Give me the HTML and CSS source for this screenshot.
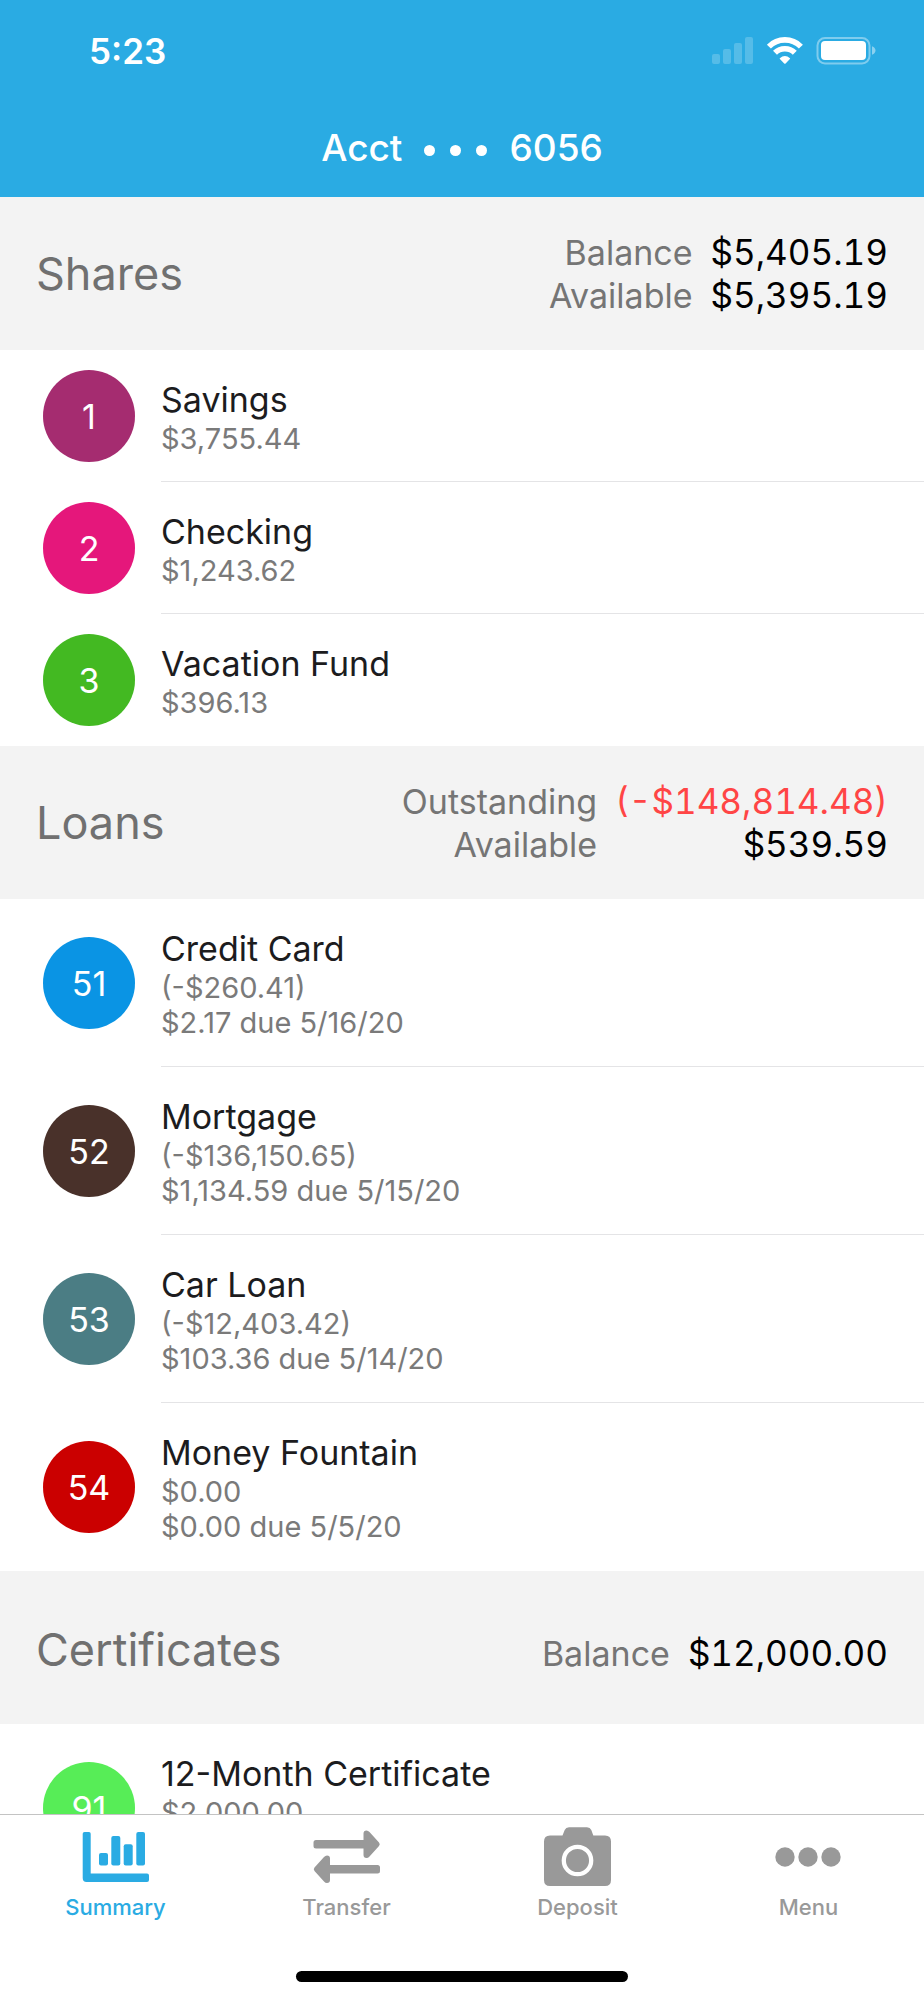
FILE: index.html
```html
<!DOCTYPE html>
<html lang="en">
<head>
<meta charset="utf-8">
<meta name="viewport" content="width=device-width, initial-scale=1">
<title>Account Summary</title>
<link rel="stylesheet" href="styles.css">
</head>
<body>
<div class="app">
  <header class="topbar">
    <div class="status">
      <span class="time">5:23</span>
      <svg class="status-icons" width="164" height="28" viewBox="0 0 164 28" fill="#fff" aria-hidden="true">
        <g opacity=".2">
          <rect x="0" y="17" width="8" height="10" rx="2"/>
          <rect x="11" y="12" width="8" height="15" rx="2"/>
          <rect x="22" y="6" width="8" height="21" rx="2"/>
          <rect x="33" y="0" width="8" height="27" rx="2"/>
        </g>
        <g fill="none" stroke="#fff" stroke-width="5.6">
          <path d="M56.900 9.600A22.400 22.400 0 0 1 88.900 9.600"/>
          <path d="M63 15.800A14 14 0 0 1 82.800 15.800"/>
        </g>
        <path d="M67.800 21.200Q72.900 16.800 78 21.200Q78.300 21.600 77.900 22L73.600 26.400Q72.900 27 72.200 26.400L67.900 22Q67.500 21.600 67.800 21.200Z"/>
        <rect x="105.500" y="1" width="52" height="25.500" rx="7.500" fill="none" stroke="#fff" stroke-width="2" opacity=".4"/>
        <rect x="109" y="4" width="45" height="19" rx="4"/>
        <path d="M160 9.200Q163.500 10.600 163.500 13.500T160 17.800Z" opacity=".45"/>
      </svg>
    </div>
    <h1 class="title"><span>Acct</span><span class="mask"><i></i><i></i><i></i></span><span>6056</span></h1>
  </header>

  <main class="accounts">
    <section>
      <div class="section-head">
        <h2>Shares</h2>
        <dl class="totals">
          <dt>Balance</dt><dd>$5,405.19</dd>
          <dt>Available</dt><dd>$5,395.19</dd>
        </dl>
      </div>
      <ul class="list">
        <li class="row"><span class="badge plum">1</span><div class="info"><h3>Savings</h3><p>$3,755.44</p></div></li>
        <li class="row"><span class="badge pink">2</span><div class="info"><h3>Checking</h3><p>$1,243.62</p></div></li>
        <li class="row"><span class="badge green">3</span><div class="info"><h3>Vacation Fund</h3><p>$396.13</p></div></li>
      </ul>
    </section>

    <section>
      <div class="section-head">
        <h2>Loans</h2>
        <dl class="totals">
          <dt>Outstanding</dt><dd class="negative">(-$148,814.48)</dd>
          <dt>Available</dt><dd>$539.59</dd>
        </dl>
      </div>
      <ul class="list tall">
        <li class="row"><span class="badge blue">51</span><div class="info"><h3>Credit Card</h3><p>(-$260.41)</p><p>$2.17 due 5/16/20</p></div></li>
        <li class="row"><span class="badge brown">52</span><div class="info"><h3>Mortgage</h3><p>(-$136,150.65)</p><p>$1,134.59 due 5/15/20</p></div></li>
        <li class="row"><span class="badge teal">53</span><div class="info"><h3>Car Loan</h3><p>(-$12,403.42)</p><p>$103.36 due 5/14/20</p></div></li>
        <li class="row"><span class="badge red">54</span><div class="info"><h3>Money Fountain</h3><p>$0.00</p><p>$0.00 due 5/5/20</p></div></li>
      </ul>
    </section>

    <section>
      <div class="section-head single">
        <h2>Certificates</h2>
        <dl class="totals">
          <dt>Balance</dt><dd>$12,000.00</dd>
        </dl>
      </div>
      <ul class="list tall">
        <li class="row"><span class="badge lime">91</span><div class="info"><h3>12-Month Certificate</h3><p>$2,000.00</p></div></li>
      </ul>
    </section>
  </main>

  <nav class="tabbar">
    <div class="tabs">
      <a class="tab active" href="#summary" aria-current="page">
        <svg width="68" height="60" viewBox="0 0 68 60" fill="currentColor" aria-hidden="true">
          <path d="M2.500 5H7Q8.700 5 8.700 6.700V46.600H65Q67 46.600 67 48.600V53Q67 55 65 55H4.500Q.700 55 .700 51V6.700Q.700 5 2.500 5Z"/>
          <rect x="17" y="26" width="9" height="12.500" rx="2"/>
          <rect x="29.300" y="9" width="9" height="29.500" rx="2"/>
          <rect x="41.700" y="17.300" width="9" height="21.200" rx="2"/>
          <rect x="54.300" y="5" width="8.700" height="33.500" rx="2"/>
        </svg>
        <span>Summary</span>
      </a>
      <a class="tab" href="#transfer">
        <svg width="68" height="60" viewBox="0 0 68 60" fill="currentColor" aria-hidden="true">
          <path d="M3 13H50.500V6.500Q50.500 3.500 53.500 3.500Q55.100 3.500 56.500 5L66 15.600Q67.500 17.300 66 19L56.500 29.500Q55.100 31 53.500 31Q50.500 31 50.500 28V21.500H3Q.500 21.500 .500 19V15.500Q.500 13 3 13Z"/>
          <path d="M64.500 38H17V31.500Q17 28.500 14 28.500Q12.400 28.500 11 30L1.500 40.600Q0 42.300 1.500 44L11 54.500Q12.400 56 14 56Q17 56 17 53V46.500H64.500Q67 46.500 67 44V40.500Q67 38 64.500 38Z"/>
        </svg>
        <span>Transfer</span>
      </a>
      <a class="tab" href="#deposit">
        <svg width="68" height="60" viewBox="0 0 68 60" fill="currentColor" aria-hidden="true">
          <path d="M6 8.500H18.500L20.700 3Q21.900 .300 25 .300H43Q46.100 .300 47.300 3L49.300 8.500H61Q67 8.500 67 14.500V53Q67 59 61 59H6Q0 59 0 53V14.500Q0 8.500 6 8.500Z"/>
          <circle cx="33.500" cy="33.500" r="13.700" fill="none" stroke="#fff" stroke-width="4.300"/>
        </svg>
        <span>Deposit</span>
      </a>
      <a class="tab" href="#menu">
        <svg width="68" height="60" viewBox="0 0 68 60" fill="currentColor" aria-hidden="true">
          <circle cx="10" cy="30" r="9.700"/><circle cx="33" cy="30" r="9.700"/><circle cx="56" cy="30" r="9.700"/>
        </svg>
        <span>Menu</span>
      </a>
    </div>
    <div class="home-indicator"></div>
  </nav>
</div>
</body>
</html>
```

FILE: styles.css
```css
* { box-sizing: border-box; margin: 0; padding: 0; }

body {
  background: #fff;
  color: #1c1c1e;
  font-family: Inter, "Liberation Sans", sans-serif;
}

.app {
  display: flex;
  flex-direction: column;
  height: 100vh;
  overflow: hidden;
}

.topbar {
  flex: none;
  background: #2aabe3;
  color: #fff;
}

.status {
  display: flex;
  align-items: center;
  justify-content: space-between;
  height: 102px;
  padding: 0 48px 0 89px;
}

.time { font-size: 35px; font-weight: 600; line-height: 40px; }
.status-icons { flex: none; }

.title {
  display: flex;
  justify-content: center;
  align-items: center;
  gap: 22px;
  height: 95px;
  padding-bottom: 4px;
  font-size: 37px;
  font-weight: 500;
}

.mask { display: flex; gap: 15px; padding-top: 5px; }
.mask i { width: 11px; height: 11px; border-radius: 50%; background: #fff; }

.accounts { flex: 1; min-height: 0; overflow: hidden; }

.section-head {
  display: flex;
  align-items: center;
  justify-content: space-between;
  min-height: 153px;
  padding: 0 36px;
  background: #f3f3f3;
}

.section-head.single { align-items: baseline; padding-top: 50px; }

.section-head h2 {
  color: #707070;
  font-size: 45px;
  font-weight: 400;
  line-height: 58px;
}

.totals {
  display: grid;
  grid-template-columns: auto auto;
  align-items: baseline;
  column-gap: 18px;
  font-size: 35px;
  line-height: 43px;
  text-align: right;
}

.totals dt { color: #757575; font-size: 34px; }
.totals dd { color: #000; font-variant-numeric: tabular-nums; }
.totals .negative { color: #ff4545; }

.list { list-style: none; }

.row { display: flex; align-items: center; padding-left: 43px; }

.badge {
  flex: none;
  display: grid;
  place-items: center;
  width: 92px;
  height: 92px;
  border-radius: 50%;
  color: #fff;
  font-size: 34px;
}

.info {
  flex: 1;
  min-height: 132px;
  margin-left: 26px;
  padding-top: 28px;
}

.tall .info { min-height: 168px; }
.row:not(:last-child) .info { border-bottom: 1px solid #e4e4e6; }

.info h3 { font-size: 34px; font-weight: 400; line-height: 43px; }
.info p { color: #7a7a7a; font-size: 29px; line-height: 35px; }

.plum { background: #a52c70; }
.pink { background: #e5177b; }
.green { background: #43b922; }
.blue { background: #0a94e4; }
.brown { background: #49312a; }
.teal { background: #4b7d84; }
.red { background: #cb0000; }
.lime { background: #57ed57; }

.tabbar {
  flex: none;
  display: flex;
  flex-direction: column;
  align-items: center;
  justify-content: space-between;
  height: 186px;
  padding: 12px 0 18px;
  border-top: 1px solid #c3c3c3;
  background: #fff;
}

.tabs { display: grid; grid-template-columns: repeat(4, 1fr); width: 100%; }

.tab {
  display: flex;
  flex-direction: column;
  align-items: center;
  gap: 6px;
  color: #999;
  font-size: 22px;
  font-weight: 500;
  line-height: 28px;
  text-decoration: none;
}

.tab.active { color: #2aabe3; }

.home-indicator {
  width: 36%;
  height: 11px;
  border-radius: 6px;
  background: #000;
}
```
